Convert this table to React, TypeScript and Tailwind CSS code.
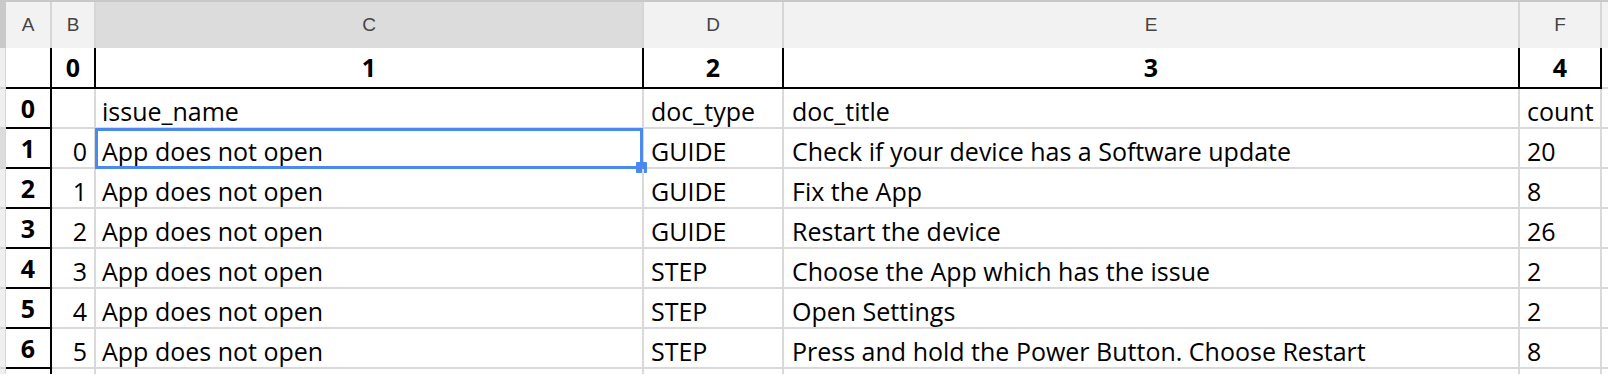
import React from "react"

// column letters along the top of the sheet
const letters = ["A", "B", "C", "D", "E", "F"]

const rows = [
  { idx: 1, n: "0", issue: "App does not open", type: "GUIDE", title: "Check if your device has a Software update", count: "20" },
  { idx: 2, n: "1", issue: "App does not open", type: "GUIDE", title: "Fix the App", count: "8" },
  { idx: 3, n: "2", issue: "App does not open", type: "GUIDE", title: "Restart the device", count: "26" },
  { idx: 4, n: "3", issue: "App does not open", type: "STEP", title: "Choose the App which has the issue", count: "2" },
  { idx: 5, n: "4", issue: "App does not open", type: "STEP", title: "Open Settings", count: "2" },
  { idx: 6, n: "5", issue: "App does not open", type: "STEP", title: "Press and hold the Power Button. Choose Restart", count: "8" },
]

const cell = "h-[40px] border-b-2 border-r-2 border-[#d9d9d9] flex items-end pb-[1px] text-[25px] leading-[29px] text-black"
const indexCell = "h-[40px] border-b-2 border-r-2 border-black flex items-center justify-center font-bold text-[25px] leading-[29px]"

export default function App() {
  return (
    <div
      className="w-[1608px] h-[374px] overflow-hidden bg-white border-t-2 border-[#c8c8c8]"
      style={{ fontFamily: "'Open Sans', 'Noto Sans', sans-serif" }}
    >
      <div className="grid grid-cols-[6px_46px_44px_548px_140px_736px_82px_6px]">
        {/* letter header */}
        <div className="h-[46px] bg-[#c9c9c9]" />
        {letters.map((l) => (
          <div
            key={l}
            className={`h-[46px] border-r-2 border-[#d6d6d6] flex items-center justify-center text-[19px] text-[#444444] ${
              l === "C" ? "bg-[#dcdcdc]" : "bg-[#f2f2f2]"
            }`}
            style={{ fontFamily: "'Liberation Sans', Arial, sans-serif" }}
          >
            {l}
          </div>
        ))}
        <div className="h-[46px] bg-[#f2f2f2]" />

        {/* pandas column index row */}
        <div className="h-[41px] bg-[#efefef] border-b-2 border-r border-[#d6d6d6]" />
        {["", "0", "1", "2", "3", "4"].map((v, i) => (
          <div
            key={i}
            className="h-[41px] border-b-2 border-r-2 border-black flex items-center justify-center font-bold text-[25px] leading-[29px]"
          >
            {v}
          </div>
        ))}
        <div className="h-[41px] border-b-2 border-[#d9d9d9]" />

        {/* header labels */}
        <div className="h-[40px] bg-[#efefef] border-b-2 border-r border-[#d6d6d6]" />
        <div className={indexCell}>0</div>
        <div className={cell} />
        <div className={`${cell} pl-[6px]`}>issue_name</div>
        <div className={`${cell} pl-[7px]`}>doc_type</div>
        <div className={`${cell} pl-[8px]`}>doc_title</div>
        <div className={`${cell} pl-[7px]`}>count</div>
        <div className="h-[40px] border-b-2 border-[#d9d9d9]" />

        {rows.map((r) => (
          <React.Fragment key={r.idx}>
            <div
              className={`h-[40px] border-b-2 border-r border-[#d6d6d6] ${
                r.idx === 1 ? "bg-[#dcdcdc]" : "bg-[#efefef]"
              }`}
            />
            <div className={indexCell}>{r.idx}</div>
            <div className={`${cell} justify-end pr-[7px]`}>{r.n}</div>
            <div className={`${cell} pl-[6px] relative`}>
              {r.idx === 1 && (
                <>
                  <div className="absolute left-[-1px] top-[-1px] w-[548px] h-[41px] border-[3px] border-[#4a89f0]" />
                  <div className="absolute left-[540px] top-[33px] w-[11px] h-[11px] bg-[#4a89f0] rounded-[1px]" />
                </>
              )}
              {r.issue}
            </div>
            <div className={`${cell} pl-[7px]`}>{r.type}</div>
            <div className={`${cell} pl-[8px]`}>{r.title}</div>
            <div className={`${cell} pl-[7px]`}>{r.count}</div>
            <div className="h-[40px] border-b-2 border-[#d9d9d9]" />
          </React.Fragment>
        ))}

        {/* next row, cut off at the bottom */}
        <div className="h-[40px] bg-[#efefef] border-r border-[#d6d6d6]" />
        <div className="h-[40px] border-r-2 border-black" />
        <div className="h-[40px] border-r-2 border-[#d9d9d9]" />
        <div className="h-[40px] border-r-2 border-[#d9d9d9]" />
        <div className="h-[40px] border-r-2 border-[#d9d9d9]" />
        <div className="h-[40px] border-r-2 border-[#d9d9d9]" />
        <div className="h-[40px] border-r-2 border-[#d9d9d9]" />
        <div className="h-[40px]" />
      </div>
    </div>
  )
}
